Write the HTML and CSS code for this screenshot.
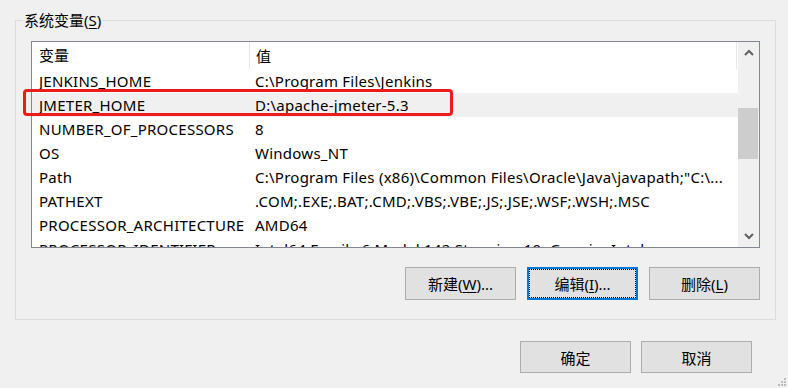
FILE: index.html
```html
<!DOCTYPE html>
<html lang="zh-CN">
<head>
    <meta charset="UTF-8" />
    <title>系统变量</title>
    <link rel="stylesheet" href="styles.css">
</head>
<body>
    <div class="dialog">
        <fieldset class="group">
            <legend class="group-title">系统变量(<u>S</u>)</legend>

            <div class="listview">
                <div class="list-main">
                    <div class="list-head">
                        <div class="col col-name">变量</div>
                        <div class="col col-value">值</div>
                    </div>
                    <div class="list-rows">
                        <div class="row"><div class="col col-name">JENKINS_HOME</div><div class="col col-value">C:\Program Files\Jenkins</div></div>
                        <div class="row selected"><div class="col col-name">JMETER_HOME</div><div class="col col-value">D:\apache-jmeter-5.3</div></div>
                        <div class="row"><div class="col col-name">NUMBER_OF_PROCESSORS</div><div class="col col-value">8</div></div>
                        <div class="row"><div class="col col-name">OS</div><div class="col col-value">Windows_NT</div></div>
                        <div class="row"><div class="col col-name">Path</div><div class="col col-value">C:\Program Files (x86)\Common Files\Oracle\Java\javapath;"C:\...</div></div>
                        <div class="row"><div class="col col-name">PATHEXT</div><div class="col col-value">.COM;.EXE;.BAT;.CMD;.VBS;.VBE;.JS;.JSE;.WSF;.WSH;.MSC</div></div>
                        <div class="row"><div class="col col-name">PROCESSOR_ARCHITECTURE</div><div class="col col-value">AMD64</div></div>
                        <div class="row"><div class="col col-name">PROCESSOR_IDENTIFIER</div><div class="col col-value">Intel64 Family 6 Model 142 Stepping 10, GenuineIntel</div></div>
                    </div>
                </div>
                <div class="scrollbar">
                    <div class="arrow">
                        <svg width="10" height="7" viewBox="0 0 10 7"><path d="M1 6 L5 2 L9 6" fill="none" stroke="#606060" stroke-width="2"/></svg>
                    </div>
                    <div class="track"><div class="thumb"></div></div>
                    <div class="arrow">
                        <svg width="10" height="7" viewBox="0 0 10 7"><path d="M1 1 L5 5 L9 1" fill="none" stroke="#606060" stroke-width="2"/></svg>
                    </div>
                </div>
                <!-- red annotation round the selected row -->
                <div class="mark"></div>
            </div>

            <div class="buttons">
                <button class="btn">新建(<u>W</u>)...</button>
                <button class="btn focused">编辑(<u>I</u>)...</button>
                <button class="btn">删除(<u>L</u>)</button>
            </div>
        </fieldset>

        <div class="footer">
            <button class="btn">确定</button>
            <button class="btn">取消</button>
        </div>
    </div>

    <svg class="grip" width="9" height="9" viewBox="0 0 9 9">
        <rect x="6" y="0" width="2" height="2" fill="#bcbcbc"/>
        <rect x="3" y="3" width="2" height="2" fill="#bcbcbc"/>
        <rect x="6" y="3" width="2" height="2" fill="#bcbcbc"/>
        <rect x="0" y="6" width="2" height="2" fill="#bcbcbc"/>
        <rect x="3" y="6" width="2" height="2" fill="#bcbcbc"/>
        <rect x="6" y="6" width="2" height="2" fill="#bcbcbc"/>
    </svg>
</body>
</html>
```

FILE: styles.css
```css
html, body {
    margin: 0;
    height: 100%;
    overflow: hidden;
}

body {
    background-color: #f0f0f0;
    font-family: "Noto Sans", "Noto Sans CJK SC", sans-serif;
    font-size: 15px;
    color: #000;
    position: relative;
}

.dialog {
    padding: 10px 12px 0 15px;
}

/* group box */
.group {
    margin: 0;
    border: 1px solid #dcdcdc;
    padding: 0 15px 19px 15px;
    min-width: 0;
}

.group-title {
    margin-left: -8px;
    padding: 0 1px;
    line-height: 20px;
    color: #000;
}

u {
    text-decoration-thickness: 1px;
    text-underline-offset: 2px;
}

/* list view */
.listview {
    position: relative;
    margin-top: 11px;
    height: 205px;
    border: 1px solid #828790;
    background-color: #fff;
    display: flex;
}

.list-main {
    flex: 1;
    min-width: 0;
    overflow: hidden;
}

.list-head {
    display: flex;
    height: 27px;
    align-items: center;
    border-right: 1px solid #e5e5e5;
    margin-right: 1px;
}

.list-head .col-name {
    border-right: 1px solid #e5e5e5;
    height: 27px;
    line-height: 27px;
}

.list-rows {
    letter-spacing: 0.25px;
}

.row {
    display: flex;
    height: 24px;
    line-height: 24px;
}

.row.selected {
    background-color: #f0f0f0;
}

.col {
    white-space: nowrap;
    overflow: hidden;
}

.col-name {
    width: 217px;
    flex: none;
    padding-left: 7px;
    box-sizing: border-box;
}

.col-value {
    flex: 1;
    padding-left: 6px;
}

.list-head .col-name {
    width: 218px;
}

/* scroll bar */
.scrollbar {
    width: 21px;
    flex: none;
    background-color: #f0f0f0;
    display: flex;
    flex-direction: column;
}

.arrow {
    height: 21px;
    display: flex;
    align-items: center;
    justify-content: center;
}

.track {
    flex: 1;
}

.thumb {
    margin: 45px 1px 0 0;
    height: 51px;
    background-color: #cdcdcd;
}

.mark {
    position: absolute;
    left: -9px;
    top: 47px;
    width: 424px;
    height: 21px;
    border: 3px solid #ec1c1c;
    border-radius: 4px;
    pointer-events: none;
}

/* buttons */
.buttons {
    display: flex;
    justify-content: flex-end;
    gap: 11px;
    margin-top: 19px;
}

.btn {
    width: 111px;
    height: 33px;
    padding: 0;
    background-color: #e1e1e1;
    border: 1px solid #adadad;
    border-radius: 0;
    font-family: inherit;
    font-size: 15px;
    color: #000;
}

.btn.focused {
    border: 2px solid #0078d7;
    outline: 1px dotted #000;
    outline-offset: -3px;
}

.footer {
    display: flex;
    justify-content: flex-end;
    gap: 10px;
    margin-top: 21px;
    padding-right: 24px;
}

.footer .btn {
    height: 32px;
}

.grip {
    position: absolute;
    right: 1px;
    bottom: 1px;
}
```
